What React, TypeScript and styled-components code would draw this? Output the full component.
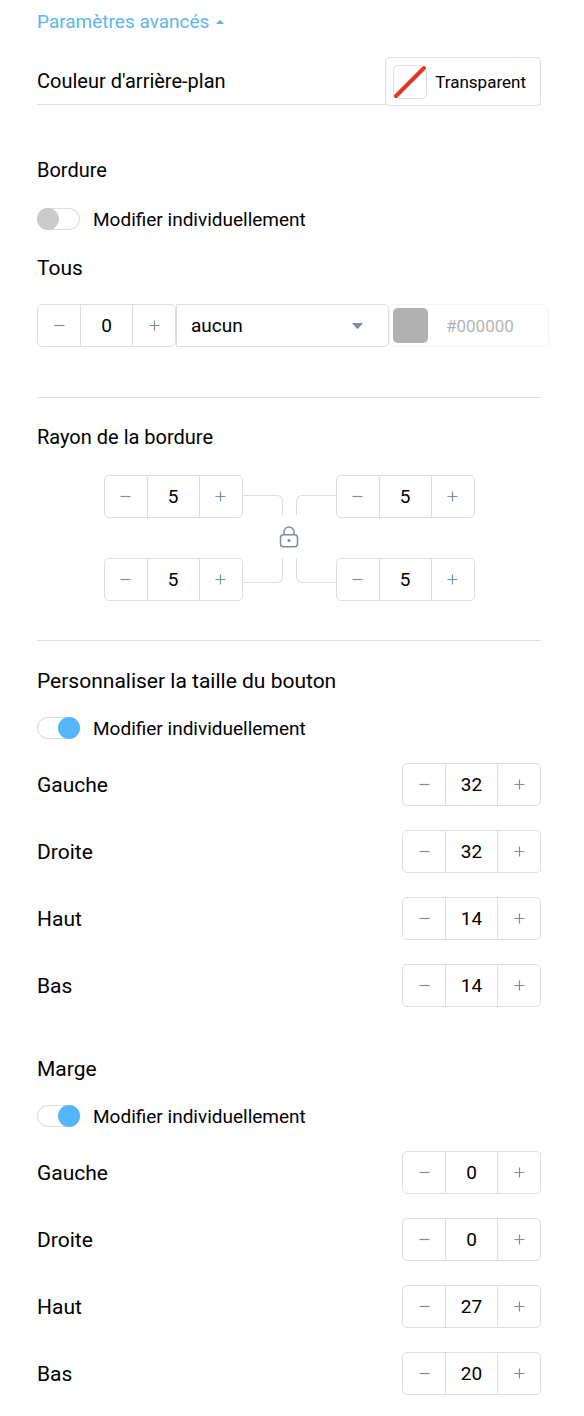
import React, { useId, useState } from "react";
import styled, { createGlobalStyle } from "styled-components";

const line = "#dcdee0";
const slate = "#7f8c9a";
const blue = "#54b5fb";

const GlobalStyle = createGlobalStyle`
  *, *::before, *::after { box-sizing: border-box; }
  body {
    margin: 0;
    background: #fff;
    color: #000;
    font-family: Roboto, "Liberation Sans", sans-serif;
    font-size: 19px;
  }
  button, input, select { font: inherit; color: inherit; margin: 0; }
  h2, h3 { margin: 0; font-weight: 400; }
`;

const Panel = styled.main`
  padding: 10px 43px 20px 37px;
`;

const AdvancedLink = styled.a`
  display: flex;
  align-items: center;
  gap: 7px;
  line-height: 24px;
  color: #5cb6ee;
  text-decoration: none;
`;

const BackgroundRow = styled.div`
  display: flex;
  align-items: center;
  justify-content: space-between;
  height: 48px;
  margin-top: 23px;
  border-bottom: 1px solid ${line};
  font-size: 20px;
  line-height: 24px;
`;

const ColorButton = styled.button`
  display: flex;
  align-items: center;
  gap: 8px;
  height: 49px;
  margin-bottom: -2px;
  padding: 0 14px 0 7px;
  border: 1px solid ${line};
  border-radius: 4px;
  background: #fff;
  font-size: 17px;
`;

const Section = styled.section<{ $top: number; $bottom?: number; $ruled?: boolean }>`
  padding-top: ${(p) => p.$top}px;
  padding-bottom: ${(p) => p.$bottom ?? 0}px;
  border-bottom: ${(p) => (p.$ruled ? `1px solid ${line}` : "none")};
`;

const Title = styled.h2<{ $large?: boolean }>`
  font-size: ${(p) => (p.$large ? 21 : 20)}px;
  line-height: 24px;
`;

const SubTitle = styled.h3`
  margin: 26px 0 24px;
  font-size: 21px;
  line-height: 24px;
`;

const SwitchLabel = styled.label<{ $gap: number }>`
  display: flex;
  align-items: center;
  gap: 13px;
  height: 22px;
  margin-top: ${(p) => p.$gap}px;
`;

const SwitchInput = styled.input`
  appearance: none;
  display: flex;
  flex: none;
  width: 43px;
  height: 22px;
  border-radius: 11px;
  box-shadow: inset 0 0 0 1px ${line};
  background: #fff;

  &::before {
    content: "";
    width: 22px;
    height: 22px;
    border-radius: 50%;
    background: #cbcbcb;
  }
  &:checked { justify-content: flex-end; }
  &:checked::before { background: ${blue}; }
`;

const StepperBox = styled.div`
  display: grid;
  grid-template-columns: 42px 53px 42px;
  flex: none;
  width: 139px;
  height: 43px;
  border: 1px solid ${line};
  border-radius: 5px;
  background: #fff;
`;

const StepButton = styled.button`
  display: grid;
  place-items: center;
  padding: 0;
  border: 0;
  background: none;
  color: ${slate};
`;

const StepInput = styled.input`
  min-width: 0;
  padding: 0;
  border: solid ${line};
  border-width: 0 1px;
  background: none;
  text-align: center;
`;

const BorderRow = styled.div`
  display: flex;
  margin-right: -8px;
`;

const SelectBox = styled.div`
  display: grid;
  flex: 1;
  align-items: center;

  & > * { grid-area: 1 / 1; }
  & > svg {
    justify-self: end;
    margin-right: 26px;
    pointer-events: none;
  }
`;

const Select = styled.select`
  appearance: none;
  width: 100%;
  height: 43px;
  padding: 0 40px 0 14px;
  border: 1px solid ${line};
  border-radius: 1px 5px 5px 1px;
  background: #fff;
`;

const HexField = styled.label`
  display: flex;
  align-items: center;
  gap: 18px;
  width: 160px;
  height: 43px;
  padding: 0 3px;
  border: 1px solid ${line};
  border-radius: 5px;
  opacity: 0.3;
`;

const Swatch = styled.span`
  flex: none;
  width: 35px;
  height: 35px;
  border-radius: 5px;
  background: #000;
`;

const HexInput = styled.input`
  min-width: 0;
  width: 100%;
  padding: 0;
  border: 0;
  background: none;
  font-size: 17px;
`;

const RadiusGrid = styled.div`
  display: grid;
  grid-template-columns: 139px 93px 139px;
  justify-content: center;
  row-gap: 40px;
  margin-top: 26px;
`;

const Links = styled.div`
  grid-area: 1 / 2 / 3 / 3;
  display: flex;
  flex-direction: column;
  align-items: stretch;
  justify-content: space-between;
  padding: 20px 0 18px;
`;

const LinkPair = styled.div<{ $side: "top" | "bottom" }>`
  display: flex;
  justify-content: space-between;
  height: ${(p) => (p.$side === "top" ? 20 : 25)}px;

  & > span {
    width: 40px;
    border: 0 solid ${line};
    border-${(p) => p.$side}-width: 1px;
  }
  & > span:first-child {
    border-right-width: 1px;
    border-${(p) => p.$side}-right-radius: 6px;
  }
  & > span:last-child {
    border-left-width: 1px;
    border-${(p) => p.$side}-left-radius: 6px;
  }
`;

const LockButton = styled.button`
  align-self: center;
  display: grid;
  padding: 0;
  border: 0;
  background: none;
  color: ${slate};
`;

const SideList = styled.div`
  display: flex;
  flex-direction: column;
  gap: 24px;
  margin-top: 24px;
`;

const SideRow = styled.div`
  display: flex;
  align-items: center;
  justify-content: space-between;
  font-size: 21px;

  input { font-size: 19px; }
`;

function Stepper({ value, label, id }: { value: number; label: string; id?: string }) {
  const [current, setCurrent] = useState(value);
  return (
    <StepperBox>
      <StepButton type="button" aria-label={`${label} : diminuer`} onClick={() => setCurrent(current - 1)}>
        <svg width="11" height="11" viewBox="0 0 11 11" stroke="currentColor" strokeWidth="1.2">
          <path d="M.5 5.5h10" />
        </svg>
      </StepButton>
      <StepInput
        id={id}
        aria-label={label}
        inputMode="numeric"
        value={current}
        onChange={(e) => setCurrent(Number(e.target.value) || 0)}
      />
      <StepButton type="button" aria-label={`${label} : augmenter`} onClick={() => setCurrent(current + 1)}>
        <svg width="11" height="11" viewBox="0 0 11 11" stroke="currentColor" strokeWidth="1.2">
          <path d="M.5 5.5h10M5.5 .5v10" />
        </svg>
      </StepButton>
    </StepperBox>
  );
}

function Switch({ on = false, gap }: { on?: boolean; gap: number }) {
  return (
    <SwitchLabel $gap={gap}>
      <SwitchInput type="checkbox" role="switch" defaultChecked={on} />
      Modifier individuellement
    </SwitchLabel>
  );
}

function Sides({ values }: { values: [string, number][] }) {
  const base = useId();
  return (
    <SideList>
      {values.map(([name, value]) => (
        <SideRow key={name}>
          <label htmlFor={base + name}>{name}</label>
          <Stepper id={base + name} label={name} value={value} />
        </SideRow>
      ))}
    </SideList>
  );
}

export default function App() {
  return (
    <>
      <GlobalStyle />
      <Panel>
        <AdvancedLink href="#avances">
          Paramètres avancés
          <svg width="8" height="4" viewBox="0 0 8 4" fill="currentColor">
            <path d="M0 4 3.5.3q.5-.5 1 0L8 4z" />
          </svg>
        </AdvancedLink>

        <BackgroundRow>
          <span>Couleur d'arrière-plan</span>
          <ColorButton type="button">
            <svg width="34" height="34" viewBox="0 0 34 34" fill="none">
              <rect x=".5" y=".5" width="33" height="33" rx="4" stroke={line} />
              <path d="M3 31 31 3" stroke="#e2352c" strokeWidth="4" strokeLinecap="round" />
            </svg>
            Transparent
          </ColorButton>
        </BackgroundRow>

        <Section $top={53} $bottom={50} $ruled>
          <Title>Bordure</Title>
          <Switch gap={26} />
          <SubTitle>Tous</SubTitle>
          <BorderRow>
            <Stepper label="Épaisseur de la bordure" value={0} />
            <SelectBox>
              <Select aria-label="Style de la bordure" defaultValue="aucun">
                <option>aucun</option>
                <option>plein</option>
                <option>pointillé</option>
              </Select>
              <svg width="11" height="6" viewBox="0 0 11 6" fill={slate}>
                <path d="M.6 0h9.8q.8 0 .3.6L6.2 5.4q-.7.7-1.4 0L.3.6Q-.2 0 .6 0z" />
              </svg>
            </SelectBox>
            <HexField>
              <Swatch />
              <HexInput aria-label="Couleur de la bordure" defaultValue="#000000" disabled />
            </HexField>
          </BorderRow>
        </Section>

        <Section $top={27} $bottom={39} $ruled>
          <Title>Rayon de la bordure</Title>
          <RadiusGrid>
            <Stepper label="Haut gauche" value={5} />
            <Links>
              <LinkPair $side="top"><span /><span /></LinkPair>
              <LockButton type="button" aria-label="Lier les rayons">
                <svg width="20" height="22" viewBox="0 0 20 22" fill="none" stroke="currentColor" strokeWidth="1.5">
                  <rect x="1.5" y="8.7" width="17" height="12" rx="3" />
                  <path d="M5 8.7V6a5 5 0 0 1 10 0v2.7" />
                  <circle cx="10" cy="14.5" r="1.6" fill="currentColor" stroke="none" />
                </svg>
              </LockButton>
              <LinkPair $side="bottom"><span /><span /></LinkPair>
            </Links>
            <Stepper label="Haut droite" value={5} />
            <Stepper label="Bas gauche" value={5} />
            <Stepper label="Bas droite" value={5} />
          </RadiusGrid>
        </Section>

        <Section $top={28}>
          <Title $large>Personnaliser la taille du bouton</Title>
          <Switch on gap={24} />
          <Sides values={[["Gauche", 32], ["Droite", 32], ["Haut", 14], ["Bas", 14]]} />
        </Section>

        <Section $top={50}>
          <Title $large>Marge</Title>
          <Switch on gap={24} />
          <Sides values={[["Gauche", 0], ["Droite", 0], ["Haut", 27], ["Bas", 20]]} />
        </Section>
      </Panel>
    </>
  );
}
